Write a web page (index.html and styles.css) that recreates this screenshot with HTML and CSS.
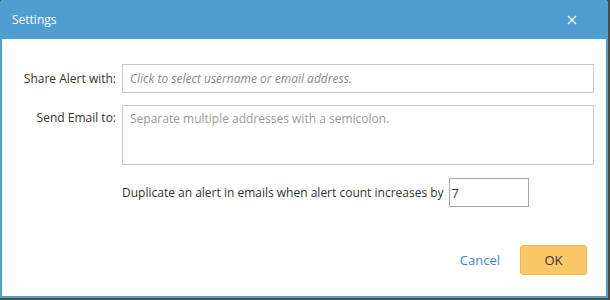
FILE: index.html
```html
<!DOCTYPE html>
<html>
<head>
    <title>Settings</title>
    <link rel="stylesheet" href="styles.css">
</head>
<body>
    <div class="dialog">
        <div class="dialog-header">
            <span class="dialog-title">Settings</span>
            <button class="close-btn" type="button" aria-label="Close">
                <svg width="10" height="10" viewBox="0 0 10 10">
                    <path d="M1 1 L9 9 M9 1 L1 9" stroke="#fff" stroke-width="1.3" fill="none"/>
                </svg>
            </button>
        </div>
        <form class="dialog-body">
            <div class="form-grid">
                <label class="field-label" for="share">Share Alert with:</label>
                <input type="text" id="share" class="text-field" placeholder="Click to select username or email address.">

                <label class="field-label label-top" for="emails">Send Email to:</label>
                <textarea id="emails" class="text-area" placeholder="Separate multiple addresses with a semicolon."></textarea>

                <span></span>
                <div class="dup-row">
                    <label for="count">Duplicate an alert in emails when alert count increases by</label>
                    <input type="text" id="count" class="count-field" value="7">
                </div>
            </div>
            <div class="dialog-footer">
                <a href="#" class="cancel-link">Cancel</a>
                <button type="button" class="ok-btn">OK</button>
            </div>
        </form>
    </div>
</body>
</html>
```

FILE: styles.css
```css
* {
	box-sizing: border-box;
}

body {
	margin: 0;
	padding: 0;
	background-color: #4a4a4a;
	font-family: "Open Sans", Arial, sans-serif;
	font-size: 12px;
	color: #333;
}

.dialog {
	width: 608px;
	height: 298px;
	background-color: #fff;
	border: 2px solid #4f9dd1;
	border-top: none;
	border-radius: 3px 3px 0 0;
	display: flex;
	flex-direction: column;
}

.dialog-header {
	height: 39px;
	margin: 0 -2px;
	padding: 0 31px 0 12px;
	background-color: #4f9dd1;
	border-radius: 3px 3px 0 0;
	display: flex;
	align-items: center;
	justify-content: space-between;
	color: #fff;
}

.dialog-title {
	font-size: 12px;
}

.close-btn {
	background: none;
	border: none;
	padding: 0;
	width: 10px;
	height: 10px;
	display: flex;
	cursor: pointer;
}

.dialog-body {
	flex: 1;
	padding: 25px 12px 0 0;
	display: flex;
	flex-direction: column;
}

.form-grid {
	display: grid;
	grid-template-columns: 114px 472px;
	column-gap: 6px;
	row-gap: 12px;
}

.field-label {
	text-align: right;
	align-self: center;
	white-space: nowrap;
}

.label-top {
	align-self: start;
	padding-top: 4px;
}

.text-field,
.text-area {
	border: 1px solid #c8c8c8;
	font-family: "Open Sans", Arial, sans-serif;
	font-size: 12px;
	color: #333;
	outline: none;
}

.text-field {
	height: 29px;
	padding: 0 7px;
}

.text-field::placeholder {
	color: #8a8a8a;
	font-style: italic;
}

.text-area {
	height: 60px;
	padding: 4px 7px;
	resize: none;
}

.text-area::placeholder {
	color: #9a9a9a;
}

.dup-row {
	display: flex;
	align-items: center;
	gap: 5px;
	margin-top: 1px;
}

.count-field {
	width: 80px;
	height: 29px;
	border: 1px solid #a8a8a8;
	padding: 0 2px;
	font-family: "Open Sans", Arial, sans-serif;
	font-size: 13px;
	color: #333;
	outline: none;
}

.dialog-footer {
	margin-top: 38px;
	padding-right: 7px;
	display: flex;
	justify-content: flex-end;
	align-items: center;
	gap: 20px;
}

.cancel-link {
	color: #3d87c6;
	text-decoration: none;
	font-size: 13px;
}

.ok-btn {
	width: 67px;
	height: 30px;
	background-color: #fcc766;
	border: 1px solid #f2b34b;
	border-radius: 3px;
	font-family: "Open Sans", Arial, sans-serif;
	font-size: 13px;
	color: #333;
	cursor: pointer;
}
```
